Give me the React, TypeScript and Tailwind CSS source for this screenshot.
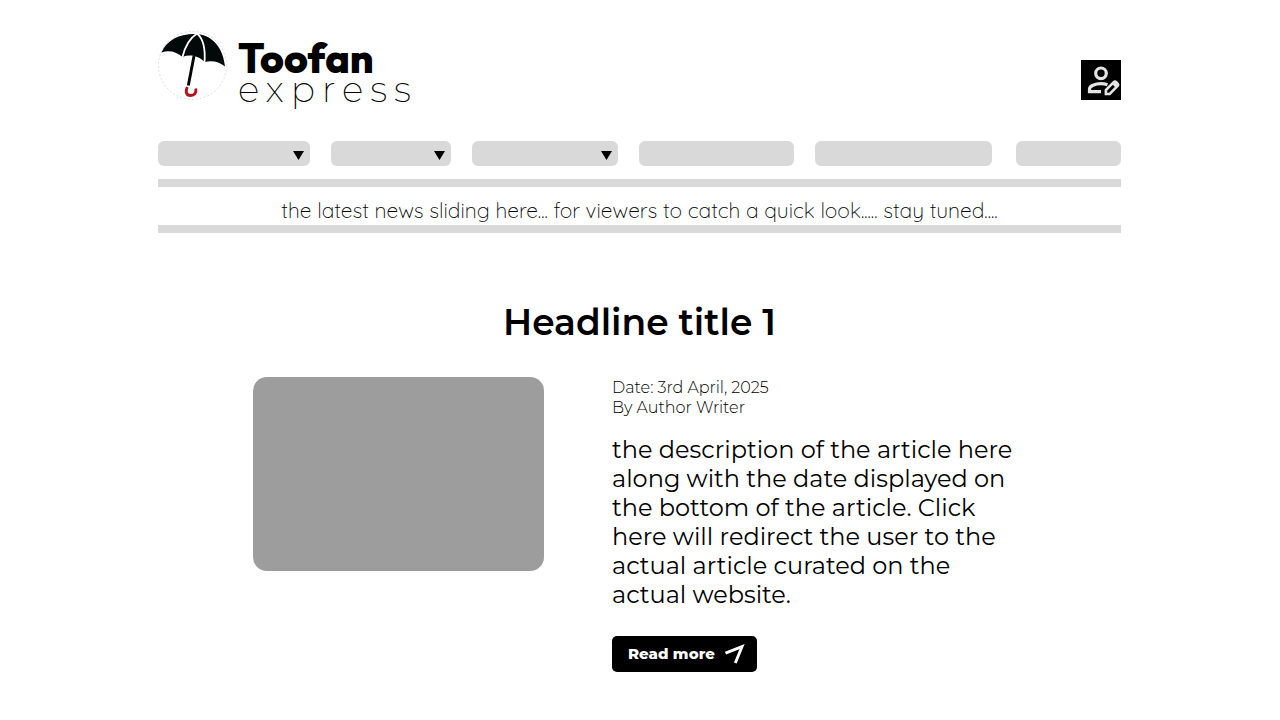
import React from "react";

type NavItem = { label: string; width: string; menu: boolean };

const navItems: NavItem[] = [
  { label: "Category", width: "w-[152px]", menu: true },
  { label: "Region", width: "w-[120px]", menu: true },
  { label: "Topic", width: "w-[146px]", menu: true },
  { label: "Features", width: "w-[155px]", menu: false },
  { label: "Opinion", width: "w-[177px]", menu: false },
  { label: "About", width: "w-[105px] ml-auto", menu: false },
];

function UmbrellaLogo() {
  return (
    <svg viewBox="0 0 70 70" className="size-[70px] shrink-0" aria-hidden="true">
      <circle cx="34.5" cy="35.5" r="34" fill="#fff" stroke="#d4d4d4" strokeWidth="0.8" strokeDasharray="2 2" />
      <path d="M3.500 22.500C9 10 21 4 36 4C54 4 65 17 67 36.500C61 31.500 54 30 46.500 32C41 26 32 24 24.500 27C18 21.500 11 20 3.500 22.500Z" fill="#020a09" />
      <path d="M24.300 27.500C27 16 32 8 39 3.500C46 9 47.500 19 46.500 33" fill="none" stroke="#fff" strokeWidth="1.800" />
      <path d="M36 26L30.300 55.500" stroke="#050505" strokeWidth="2.900" />
      <path d="M29.300 57C27 62 28.500 65.500 32.500 65.500C36.500 65.500 38.500 63 37.800 58.500" fill="none" stroke="#b3121b" strokeWidth="2.800" />
    </svg>
  );
}

function PersonEditIcon() {
  return (
    <svg viewBox="0 0 40 40" className="size-10" fill="none" stroke="#e3e3e3" aria-hidden="true">
      <circle cx="20" cy="13.300" r="5.300" strokeWidth="3.200" />
      <path d="M20 31.700H8.500V29C8.500 26 14 23.600 20 23.600C22.500 23.600 24.500 24 26.500 24.700" strokeWidth="3.200" />
      <path d="M24.900 34V30L32.500 22.400Q34 21 35.500 22.500L36.400 23.400Q37.800 24.800 36.400 26.200L28.700 34Z" strokeWidth="2.600" />
      <path d="M30.500 23.500L33 21L38 25.500L35 28Z" fill="#e3e3e3" stroke="none" />
    </svg>
  );
}

function NavEntry({ item }: { item: NavItem }) {
  if (!item.menu) {
    return <a href="#" aria-label={item.label} className={`${item.width} h-[25px] rounded-md bg-[#d9d9d9]`} />;
  }
  return (
    <div className={`${item.width} relative h-[25px]`}>
      <select aria-label={item.label} className="block size-full appearance-none rounded-md bg-[#d9d9d9]" />
      <svg viewBox="0 0 10 9" preserveAspectRatio="none" className="pointer-events-none absolute right-[6px] top-[10px] h-[9px] w-[11px]" aria-hidden="true">
        <path d="M0 0H10L5 9Z" fill="#000" />
      </svg>
    </div>
  );
}

export default function App() {
  return (
    <div className="bg-white pb-12 font-['Montserrat','Inter',sans-serif] text-black">
      <div className="mx-auto w-full max-w-[964px] pr-px">
        <header className="flex items-start justify-between pt-[30px]">
          <a href="#" className="flex items-start gap-[10px]">
            <UmbrellaLogo />
            <span className="flex flex-col pt-[10px]">
              <span className="font-['Outfit','Montserrat',sans-serif] text-[41px] font-extrabold leading-[36px]">Toofan</span>
              <span className="text-[36px] font-extralight leading-[26px] tracking-[0.19em]">express</span>
            </span>
          </a>
          <button type="button" aria-label="Edit profile" className="mt-[30px] bg-black">
            <PersonEditIcon />
          </button>
        </header>

        <nav className="mt-[39px] flex gap-[21px]">
          {navItems.map((item) => (
            <NavEntry key={item.label} item={item} />
          ))}
        </nav>

        <p className="mt-[13px] border-y-8 border-[#d9d9d9] pt-2 text-center font-['Quicksand','Montserrat',sans-serif] text-[21px] font-light leading-[30px]">
          the latest news sliding here... for viewers to catch a quick look..... stay tuned....
        </p>

        <main>
          <article className="mt-[67px]">
            <h1 className="text-center text-[36px] font-semibold leading-[44px]">Headline title 1</h1>
            <div className="mt-[33px] flex items-start gap-[68px] pl-[95px]">
              <div className="h-[194px] w-[291px] shrink-0 rounded-[14px] bg-[#9d9d9d]" />
              <div className="max-w-[408px]">
                <div className="pt-px text-[16px] font-light leading-5">
                  <p>Date: 3rd April, 2025</p>
                  <p>By Author Writer</p>
                </div>
                <p className="mt-[17px] text-[24px] leading-[29px]">
                  the description of the article here along with the date displayed on the bottom of the article. Click
                  here will redirect the user to the actual article curated on the actual website.
                </p>
                <a
                  href="#"
                  className="mt-[27px] inline-flex h-9 items-center gap-[10px] rounded-[5px] bg-black pl-4 pr-3 text-[15px] font-extrabold leading-5 text-white"
                >
                  Read more
                  <svg viewBox="0 0 20 20" className="size-5" fill="none" stroke="#fff" strokeWidth="2.900" aria-hidden="true">
                    <path d="M0.500 9.200L17 2.700L10.300 19" />
                  </svg>
                </a>
              </div>
            </div>
          </article>
        </main>
      </div>
    </div>
  );
}
